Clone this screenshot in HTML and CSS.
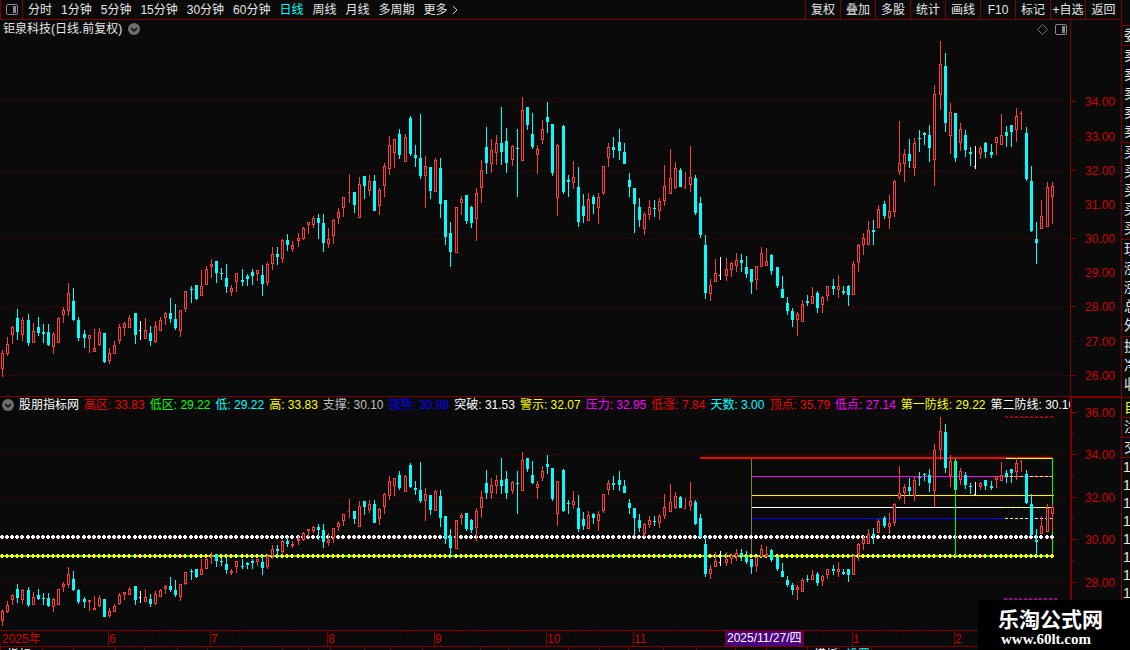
FILE: index.html
```html
<!DOCTYPE html>
<html lang="zh-CN">
<head>
    <meta charset="UTF-8">
    <meta name="viewport" content="width=device-width, initial-scale=1.0">
    <title>钜泉科技 日线</title>
    <link rel="stylesheet" href="styles.css">
</head>
<body>
    <div class="terminal">
        <main class="main">
            <nav class="toolbar">
                <button class="layout-btn" aria-label="布局">
                    <svg width="12" height="11" viewBox="0 0 12 11"><rect x="0.5" y="0.5" width="11" height="10" rx="1.5" fill="none" stroke="#8a8a8a"/><rect x="7" y="2" width="3" height="7" fill="#8a8a8a"/></svg>
                </button>
                <div class="periods">
                    <button>分时</button>
                    <button>1分钟</button>
                    <button>5分钟</button>
                    <button>15分钟</button>
                    <button>30分钟</button>
                    <button>60分钟</button>
                    <button class="active">日线</button>
                    <button>周线</button>
                    <button>月线</button>
                    <button>多周期</button>
                    <button class="more">更多<svg width="6" height="10" viewBox="0 0 6 10"><path d="M1 1l4 4-4 4" fill="none" stroke="#d0d0d0"/></svg></button>
                </div>
                <div class="tools">
                    <button>复权</button>
                    <button>叠加</button>
                    <button>多股</button>
                    <button>统计</button>
                    <button>画线</button>
                    <button>F10</button>
                    <button>标记</button>
                    <button>+自选</button>
                    <button>返回</button>
                </div>
            </nav>

            <section class="panel">
                <div class="plot">
                    <header class="title">
                        <span>钜泉科技(日线.前复权)</span>
                        <svg class="chevron" width="12" height="12" viewBox="0 0 12 12"><circle cx="6" cy="6" r="6" fill="#6e6e6e"/><path d="M3 5l3 3 3-3" fill="none" stroke="#0a0a0a" stroke-width="1.5"/></svg>
                        <span class="corner">
                            <svg width="11" height="11" viewBox="0 0 11 11"><path d="M5.5 0.5l5 5-5 5-5-5z" fill="none" stroke="#777"/></svg>
                            <svg width="12" height="11" viewBox="0 0 12 11"><rect x="0.5" y="0.5" width="11" height="10" rx="1.5" fill="none" stroke="#8a8a8a"/><rect x="7" y="2" width="3" height="7" fill="#8a8a8a"/></svg>
                        </span>
                    </header>
                    <svg id="price" width="100%" height="358"></svg>
                </div>
                <svg id="priceAxis" class="axis" height="376"></svg>
            </section>

            <section class="panel lower">
                <div class="plot">
                    <header class="values">
                        <svg class="chevron" width="12" height="12" viewBox="0 0 12 12"><circle cx="6" cy="6" r="6" fill="#6e6e6e"/><path d="M3 5l3 3 3-3" fill="none" stroke="#0a0a0a" stroke-width="1.5"/></svg>
                        <span class="white">股朋指标网</span>
                        <span class="red">高区: 33.83</span>
                        <span class="green">低区: 29.22</span>
                        <span class="cyan">低: 29.22</span>
                        <span class="yellow">高: 33.83</span>
                        <span class="gray">支撑: 30.10</span>
                        <span class="blue">强势: 30.98</span>
                        <span class="white">突破: 31.53</span>
                        <span class="yellow">警示: 32.07</span>
                        <span class="magenta">压力: 32.95</span>
                        <span class="red">低涨: 7.84</span>
                        <span class="cyan">天数: 3.00</span>
                        <span class="red">顶点: 35.79</span>
                        <span class="magenta">低点: 27.14</span>
                        <span class="yellow">第一防线: 29.22</span>
                        <span class="white">第二防线: 30.10</span>
                    </header>
                    <svg id="indicator" width="100%" height="217"></svg>
                </div>
                <svg id="indicatorAxis" class="axis" height="233"></svg>
            </section>

            <svg id="dates" class="dates" width="100%" height="17"></svg>
            <div class="tabs" id="tabs"></div>
        </main>

        <aside class="rail">
            <div class="group top"></div>
            <div class="group single"><span>委</span></div>
            <div class="group"><span>卖</span><span>卖</span><span>卖</span><span>卖</span><span>卖</span></div>
            <div class="group"><span>买</span><span>买</span><span>买</span><span>买</span><span>买</span></div>
            <div class="group"><span>现</span><span>涨</span><span>涨</span><span>总</span><span>外</span></div>
            <div class="group last"><span>换</span><span>净</span><span>收</span></div>
            <div class="group single yellow"><span>自</span></div>
            <div class="group single"><span>注</span></div>
            <div class="group single"><span>交</span></div>
            <div class="ticks"><span>15</span><span>15</span><span>15</span><span>15</span><span>15</span><span>15</span><span>15</span><span>15</span></div>
        </aside>

        <div class="brand">
            <strong>乐淘公式网</strong>
            <a href="#">www.60lt.com</a>
        </div>
    </div>
    <script src="chart.js"></script>
</body>
</html>
```
FILE: styles.css
```css
body {
    margin: 0;
    background: #0a0a0a;
    color: #e6e6e6;
    font: 12px/16px "Liberation Sans", "Noto Sans CJK SC", sans-serif;
    overflow: hidden;
}
button {
    padding: 0;
    border: 0;
    background: none;
    color: inherit;
    font: inherit;
    white-space: nowrap;
    cursor: pointer;
}
svg {
    display: block;
}
.terminal {
    position: relative;
    display: flex;
    height: 100vh;
    overflow: hidden;
}
.main {
    flex: 1;
    min-width: 0;
}

/* toolbar */
.toolbar {
    display: flex;
    height: 19px;
    border-bottom: 1px solid #800000;
}
.layout-btn {
    display: flex;
    justify-content: center;
    align-items: center;
    width: 23px;
    border-left: 1px solid #800000;
    border-right: 1px solid #800000;
}
.periods {
    display: flex;
    gap: 9px;
    padding-left: 5px;
}
.active {
    color: #00ffff;
}
.more {
    display: flex;
    align-items: center;
    gap: 4px;
}
.tools {
    display: flex;
    margin-left: auto;
}
.tools button {
    box-sizing: border-box;
    width: 35px;
    border-left: 1px solid #800000;
}
.tools button:last-child {
    width: 36px;
}

/* chart panels */
.panel {
    display: flex;
}
.plot {
    flex: 1;
    min-width: 0;
}
.axis {
    box-sizing: border-box;
    flex: none;
    width: 51px;
    border-left: 1px solid #800000;
}
.lower {
    border-top: 1px solid #800000;
}
.lower .axis {
    border-left-width: 2px;
    border-top: 1px solid #800000;
}
.title {
    display: flex;
    align-items: center;
    gap: 6px;
    height: 18px;
    padding: 0 3px;
}
.corner {
    display: flex;
    gap: 7px;
    margin-left: auto;
}
.values {
    display: flex;
    align-items: center;
    gap: 5px;
    height: 16px;
    padding-left: 2px;
    overflow: hidden;
    white-space: nowrap;
}
.chevron {
    flex: none;
}
.white { color: #ffffff; }
.red { color: #f00000; }
.green { color: #00ff00; }
.cyan { color: #00ffff; }
.yellow { color: #ffff00; }
.gray { color: #c0c0c0; }
.blue { color: #0000ff; }
.magenta { color: #ff00ff; }
.label {
    fill: #d00000;
}
.picked {
    fill: #ffffff;
}

/* tab strip under the dates */
.tabs {
    display: flex;
    height: 20px;
}
.tabs span {
    box-sizing: border-box;
    flex: none;
    border-left: 1px solid #800000;
    padding-left: 6px;
    overflow: hidden;
    white-space: nowrap;
}

/* quote column */
.rail {
    width: 8px;
    flex: none;
    overflow: hidden;
    border-left: 1px solid #800000;
    font-size: 14px;
}
.group {
    display: flex;
    flex-direction: column;
    padding: 0 0 1px 2px;
    border-bottom: 1px solid #800000;
}
.group span {
    height: 19px;
    line-height: 19px;
}
.single {
    padding-bottom: 0;
}
.top {
    height: 24px;
}
.last {
    padding-bottom: 3px;
}
.ticks {
    display: flex;
    flex-direction: column;
    padding-left: 1px;
}
.ticks span {
    height: 18px;
    line-height: 18px;
}

.brand {
    position: absolute;
    right: 0;
    bottom: 0;
    display: flex;
    flex-direction: column;
    box-sizing: border-box;
    width: 152px;
    height: 50px;
    padding: 7px 0 0 20px;
    background: #000;
    color: #fff;
}
.brand strong {
    font: bold 21px/22px "Noto Sans CJK SC", sans-serif;
}
.brand a {
    padding-left: 3px;
    color: #fff;
    font: bold 15px/20px "Liberation Serif", serif;
    text-decoration: none;
}
```
FILE: chart.js
```js
// one candle per item: colour, then high, body top, body bottom, low
const candles = `
r350,353,369,377 r337,344,354,356 r326,327,335,344 c309,318,332,340 r317,320,335,341
c314,320,343,346 r323,331,343,343 c317,327,333,336 c324,332,334,343 c324,332,345,346
r332,334,347,354 r317,318,343,343 r307,310,315,323 r283,293,311,316 c288,301,320,321
c317,320,338,341 c330,334,338,348 r335,335,339,353 r329,348,352,352 r328,332,345,346
c333,333,362,363 r348,353,361,364 r341,345,354,354 r324,327,341,344 r322,323,328,336
r315,318,328,328 c313,313,335,344 w321,330,331,340 r318,330,339,339 c326,333,341,346
r321,326,342,343 r317,320,331,331 r312,313,318,325 c298,313,319,323 c304,319,328,330
r310,310,331,337 r291,291,309,312 c286,289,290,303 c285,285,299,300 r270,286,296,296
r266,269,285,285 r259,264,267,278 c261,261,273,283 c268,273,274,280 c264,278,287,293
r285,288,292,296 r273,273,282,292 c269,280,282,286 c274,276,279,286 c269,272,276,285
r270,270,274,281 c265,275,284,296 r262,264,283,286 r247,254,264,270 c247,254,257,265
r239,240,259,263 c234,240,245,251 r241,245,249,252 r233,238,241,247 r227,228,239,240
r222,222,225,234 r216,218,225,228 c214,218,223,239 c214,223,243,252 r228,239,244,248
r219,220,236,244 r208,212,218,224 r197,197,208,217 r174,192,193,203 c192,192,205,213
r177,184,218,218 c176,176,186,199 r175,181,191,196 c175,181,211,211 r188,190,206,215
r163,166,186,197 r136,145,169,175 r139,139,153,168 c129,134,155,159 r134,137,162,162
c116,118,154,156 c145,155,158,167 c114,158,176,179 r156,166,176,208 c167,167,191,199
r158,160,192,192 c158,168,204,218 c200,200,237,245 c222,233,252,267 r207,207,253,253
r196,199,203,215 c195,195,221,224 c206,207,223,228 r188,193,219,241 r160,170,188,203
c127,147,163,174 r139,150,164,173 r135,143,153,165 c107,143,152,165 c128,141,163,173
r145,146,160,166 c129,148,149,197 r97,110,161,161 c107,107,125,130 c113,134,147,149
r145,149,155,174 r120,129,140,144 c102,117,122,133 c124,124,173,176 r144,145,198,216
c125,126,192,194 c175,180,182,197 r161,177,183,189 c167,187,222,227 c194,206,216,223
r193,199,221,221 c195,197,204,214 r193,197,208,224 r166,166,193,195 r143,147,158,167
c137,147,150,158 c129,142,151,160 c143,152,164,164 c173,180,187,197 c188,188,204,233
c198,207,220,227 r212,214,229,235 r200,207,215,220 c200,208,209,217 r198,201,211,220
r165,186,201,206 r149,178,194,194 r162,168,188,189 c168,170,187,187 r172,187,188,189
r146,177,185,192 c175,178,213,215 c197,203,235,238 c235,245,293,299 r279,285,294,301
r259,273,282,282 w257,275,276,280 r258,269,276,281 r262,263,270,277 r253,260,266,272
c254,260,263,272 c256,267,274,278 c269,269,282,294 r266,266,280,290 r247,253,267,267
r248,261,266,266 c254,255,271,275 c267,267,286,288 c276,289,298,298 c297,303,311,315
c308,311,320,327 r312,314,320,336 r300,304,322,322 c295,301,303,306 r287,296,304,304
c291,293,308,313 r296,297,305,313 r286,286,296,301 c279,286,289,295 r275,286,290,298
c286,291,293,295 c285,286,295,306 r261,264,295,295 r244,245,262,272 r233,238,245,255
r221,230,245,245 c220,230,232,245 r205,209,228,228 c201,204,216,219 r195,211,218,229
r180,181,212,217 r121,163,172,175 r149,154,164,182 c139,154,161,168 r138,143,168,176
c130,138,139,152 c132,133,135,145 c125,135,148,162 r85,94,160,186 r41,64,95,110
c53,66,123,132 r103,112,136,154 c113,113,158,162 r123,129,143,151 c130,135,150,157
c147,152,154,166 w146,166,167,169 r146,148,154,159 c142,143,152,158 c144,152,155,158
r137,137,143,155 r114,135,145,145 c126,132,136,147 c125,125,132,147 r108,116,130,142
r111,113,114,130 c127,133,179,181 c166,181,231,232 c222,239,243,264 r200,216,229,229
r182,187,227,227 r182,186,197,224
`.trim().split(/\s+/).map(s => ({ color: s[0], y: s.slice(1).split(",").map(Number) }));

const colors = { r: "#ff3c3c", c: "#00ffff", w: "#ffffff" };

function candleX(i) {
    return 2 + i * 5 + Math.floor((i + 5.75) / 10.5);
}

function rect(x, y, w, h, fill) {
    return `<rect x="${x}" y="${y}" width="${w}" height="${h}" fill="${fill}"/>`;
}

function dashed(x1, x2, y, color, dash) {
    return `<path d="M${x1} ${y + 0.5}H${x2}" stroke="${color}" stroke-dasharray="${dash}"/>`;
}

function text(x, y, value, cls) {
    return `<text x="${x}" y="${y}" class="${cls || "label"}">${value}</text>`;
}

function drawCandles(scale) {
    return candles.map((candle, i) => {
        const x = candleX(i);
        const color = colors[candle.color];
        const [high, top, bottom, low] = candle.y.map(scale);
        const tall = Math.max(bottom - top, 1);
        if (candle.color === "w" || (candle.color === "r" && candle.y[2] - candle.y[1] === 1)) {
            return rect(x, high, 1, low - high, color) + rect(x - 1, top, 1, 1, color);
        }
        if (candle.color === "c") {
            return rect(x, high, 1, low - high, color) + rect(x - 1, top, 3, tall, color);
        }
        let out = rect(x, high, 1, top - high, color) + rect(x, bottom, 1, Math.max(low - bottom, 0), color);
        out += rect(x - 1, top, 3, tall, color);
        if (tall > 2) {
            out += rect(x, top + 1, 1, tall - 2, "#0a0a0a");
        }
        return out;
    }).join("");
}

function zigzag(x1, x2, y, color) {
    let d = "";
    for (let x = x1; x < x2; x += 5) {
        d += `M${x} ${y + 2}l1.5 -2l1.5 2`;
    }
    return `<path d="${d}" fill="none" stroke="${color}"/>`;
}

// price panel
const priceTop = 38;
let out = [101, 170, 238, 306, 375].map(y => dashed(1, 1068, y - priceTop, "#800000", "1 3")).join("");
out += drawCandles(y => y - priceTop);
document.getElementById("price").innerHTML = out;

out = "";
[101, 136, 170, 204, 238, 272, 306, 341, 375].forEach((y, i) => {
    out += rect(0, y - 20, i % 2 ? 2 : 5, 1, "#800000") + text(14, y - 15, (34 - i) + ".00");
});
document.getElementById("priceAxis").innerHTML = out;

// indicator panel
const lowTop = 413;
out = [454, 497, 539, 582].map(y => dashed(1, 1068, y - lowTop, "#800000", "1 3")).join("");
out += rect(751, 458 - lowTop, 1, 98, "#808040");
out += rect(700, 457 - lowTop, 353, 2, "#ff0000");
out += rect(1006, 458 - lowTop, 47, 1, "#ffff00");
out += rect(752, 476 - lowTop, 301, 1, "#ff00ff");
out += rect(752, 495 - lowTop, 302, 1, "#ffff00");
out += rect(752, 507 - lowTop, 302, 1, "#ffffff");
out += rect(752, 518 - lowTop, 301, 1, "#0000ff");
[476, 507, 518].forEach(y => {
    out += dashed(1005, 1054, y - lowTop, "#ffff00", "3 2");
});
out += rect(1, 555 - lowTop, 1053, 2, "#00ff00");
out += rect(1052, 458 - lowTop, 1, 98, "#00ff00");
candles.forEach((candle, i) => {
    const x = candleX(i);
    [[537, "#ffffff"], [556, "#ffff00"]].forEach(([y, color]) => {
        out += rect(x - 1, y - 2 - lowTop, 2, 4, color) + rect(x - 2, y - 1 - lowTop, 4, 2, color);
    });
});
out += drawCandles(y => Math.round(454 + (y - 101) * 0.623) - lowTop);
out += rect(955, 458 - lowTop, 1, 98, "#00ff00");
out += zigzag(1005, 1053, 416 - lowTop, "#ff0000");
out += zigzag(1004, 1055, 598 - lowTop, "#ff00ff");
document.getElementById("indicator").innerHTML = out;

out = "";
[412, 454, 497, 539, 582].forEach((y, i) => {
    out += rect(0, y - 398, 5, 1, "#800000") + rect(0, y - 377, 2, 1, "#800000");
    out += text(13, y - 393, (36 - i * 2) + ".00");
});
document.getElementById("indicatorAxis").innerHTML = out;

// date axis
out = rect(0, 0, "100%", 1, "#800000") + rect(0, 16, "100%", 1, "#800000");
out += text(2, 13, "2025年");
const months = [[108, "6"], [210, "7"], [327, "8"], [434, "9"], [546, "10"], [633, "11"], [852, "1"], [954, "2"]];
months.forEach(([x, name]) => {
    out += rect(x, 0, 1, 17, "#800000") + text(x + 1, 13, name);
});
[134, 159, 185, 239, 269, 298, 354, 381, 407, 462, 490, 518, 568, 590, 611, 659, 684, 710, 823, 878, 903, 929].forEach(x => {
    out += rect(x, 1, 1, 2, "#800000");
});
out += rect(725, 0, 79, 17, "#800000") + rect(726, 1, 77, 15, "#4b0082");
out += text(727, 12, "2025/11/27/四", "picked");
document.getElementById("dates").innerHTML = out;

// tab strip
const tabStops = [0, 42, 73, 115, 144, 177, 207, 241, 282, 308, 330, 364, 390, 422, 480, 508, 568, 599, 628, 663, 696, 735, 766, 807, 839, 871];
const tabNames = { 0: "指标", 807: "模板", 839: "设置" };
document.getElementById("tabs").innerHTML = tabStops.map((x, i) => {
    const width = (tabStops[i + 1] || 900) - x;
    return `<span class="${x === 839 ? "cyan" : "white"}" style="width:${width}px">${tabNames[x] || ""}</span>`;
}).join("");
```
